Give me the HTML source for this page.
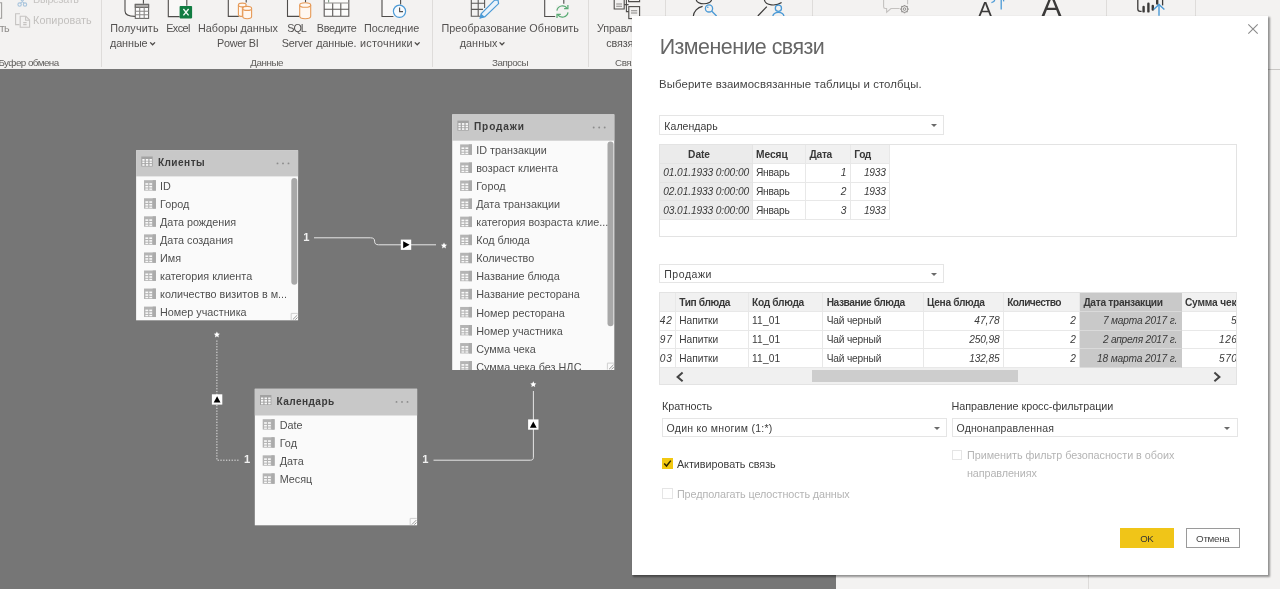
<!DOCTYPE html>
<html lang="ru">
<head>
<meta charset="utf-8">
<title>Изменение связи</title>
<style>
*{box-sizing:border-box;margin:0;padding:0}
html,body{width:1280px;height:589px;overflow:hidden;background:#f3f2f1;font-family:"Liberation Sans",sans-serif;color:#444}
.t{position:absolute;white-space:pre;line-height:1}
.b{position:absolute}
svg{position:absolute;overflow:visible}
#ribbon,#canvas,#dlg{will-change:transform}
#ribbon{position:absolute;left:0;top:0;width:1280px;height:69px;background:#f3f2f1;overflow:hidden}
#ribbon .sep{position:absolute;top:0;width:1px;height:67px;background:#dedcda}
#canvas{position:absolute;left:0;top:0;width:1280px;height:589px}
#gray{position:absolute;left:0;top:69px;width:836px;height:520px;background:#767676}
#dlg{position:absolute;left:632px;top:16px;width:636px;height:559px;background:#fff;box-shadow:1.4px 1.4px 1.8px 0.2px rgba(0,0,0,.40)}
.dd{position:absolute;height:19.4px;border:1px solid #e5e5e5;background:#fff}
.dd:after{content:"";position:absolute;right:6.4px;top:8px;border-left:3.2px solid transparent;border-right:3.2px solid transparent;border-top:3.4px solid #6a6a6a}
.grid{position:absolute;border:1px solid #e3e3e3;background:#fff;overflow:hidden}
.c{position:absolute;border-right:1px solid #e8e8e8;border-bottom:1px solid #e8e8e8;background:#fff}
.c.h{background:#f1f1f1}
.c.g{background:#ebebeb;border-color:#e4e4e4}
.c.s{background:#c9c9c9;border-right-color:#c9c9c9;border-bottom-color:#dadada}
.cb{position:absolute;width:10.6px;height:10.6px;border:1px solid #e5e5e5;background:#fff}
</style>
</head>
<body>
<div id="ribbon">
<div class="sep" style="left:101px"></div>
<div class="sep" style="left:432px"></div>
<div class="sep" style="left:588px"></div>
<div class="sep" style="left:665px"></div>
<div class="sep" style="left:812px"></div>
<div class="sep" style="left:1106px"></div>
<div class="sep" style="left:1195px"></div>
<svg width="1280" height="69" viewBox="0 0 1280 69" style="left:0;top:0" fill="none" stroke-width="1.1">
<!-- paste / cut / copy (disabled) -->
<path d="M0 2.7H1.6V18.2H0" stroke="#a19f9d"/>
<g stroke="#a9c5dd"><circle cx="19.6" cy="4.6" r="1.7"/><circle cx="25" cy="4.6" r="1.7"/><path d="M20.6 3.2 23.6 0M24 3.2 21 0"/></g>
<g stroke="#c6c4c2"><path d="M19.5 24.6H15.6V13.8H20"/><path d="M20.2 16.2H25.8L29.6 20V27.2H20.2Z"/><path d="M25.6 16.4V20.2H29.4"/><path d="M23.2 22.6h3.4M23.2 24.6h3.4"/></g>
<!-- get data -->
<path d="M125 0V11C125 14.4 128.4 16.3 135 16.4V4H143.4V0Z" fill="#f9f8f7" stroke="none"/><g stroke="#4f4d4b"><path d="M125 0V11C125 14.4 128.4 16.3 135 16.4"/><path d="M143.4 0V3.8"/></g>
<rect x="135.3" y="4.4" width="13.3" height="14" fill="#fdfdfd" stroke="#6b6967"/>
<rect x="135.3" y="4.4" width="13.3" height="3" fill="#b4b2b0" stroke="#6b6967"/>
<path d="M135.3 11.2H148.6M135.3 14.8H148.6M139.7 7.4V18.4M144.2 7.4V18.4" stroke="#8a8886"/>
<!-- excel -->
<path d="M168.3 0V16.6H180V5.8H186.8V0Z" fill="#f9f8f7" stroke="none"/><path d="M168.3 0V16.6H179.6M186.8 0V5.7" stroke="#4f4d4b"/>
<rect x="179.6" y="5.9" width="12.5" height="12.5" rx="0.8" fill="#107c41" stroke="none"/>
<path d="M183.4 9 188.6 15.4M188.6 9 183.4 15.4" stroke="#f2faf5" stroke-width="1.35"/>
<!-- datasets -->
<path d="M228.3 0V16.4H239V4H246.2V0Z" fill="#f9f8f7" stroke="none"/><path d="M228.3 0V16.4H238.8M246.2 0V2.6" stroke="#4f4d4b"/>
<g stroke="#e69a57" fill="#fff8f1"><path d="M238.4 5V14.4C238.4 15.6 240 16.4 242.4 16.4V5"/><ellipse cx="242.3" cy="5" rx="3.9" ry="1.9"/>
<path d="M242.8 8.4V16.6C242.8 17.8 244.6 18.7 247.2 18.7S251.6 17.8 251.6 16.6V8.4"/><ellipse cx="247.2" cy="8.4" rx="4.4" ry="2"/></g>
<!-- sql -->
<path d="M287.5 0V16.4H300V4H305.5V0Z" fill="#f9f8f7" stroke="none"/><path d="M287.5 0V16.4H299.8M305.5 0V2.6" stroke="#4f4d4b"/>
<g stroke="#e69a57" fill="#fff8f1"><path d="M299.7 5V16.2C299.7 17.8 302.2 18.7 305.2 18.7S310.7 17.8 310.7 16.2V5"/><ellipse cx="305.2" cy="5" rx="5.5" ry="2.3"/></g>
<!-- enter data table -->
<rect x="324.2" y="-2" width="24.6" height="18.3" fill="#fcfcfb" stroke="none"/><path d="M324.2 0V16.3H348.8V0M324.2 9.2H348.8M332.7 3V16.3M340.8 3V16.3" stroke="#5c5a58"/><path d="M324.2 3H348.8" stroke="#9a9896"/><path d="M328.6 0V2.4" stroke="#7f9a86"/>
<!-- recent sources -->
<path d="M382 0V16.5H394V5H400.6V0Z" fill="#f9f8f7" stroke="none"/><path d="M382 0V16.5H393.4M400.6 0V4.6" stroke="#4f4d4b"/>
<circle cx="399.5" cy="11.3" r="6.1" fill="#f7fbfe" stroke="#4b9ad6" stroke-width="1.2"/>
<path d="M399.6 7.6V11.6H403" stroke="#4f4d4b"/>
<!-- transform data -->
<path d="M471.3 0V16.3H480M471.3 3.2H485M471.3 9.4H483M478.2 0V16.3M484.6 0V8" stroke="#5c5a58"/>
<path d="M480.3 17.8 481.4 13.6 494.6 0.2 498 0 498.6 3.6 485 16.6Z" fill="#eaf3fb" stroke="#4b9ad6" stroke-width="1.2"/>
<path d="M480.3 17.8 481.2 14.4 483.8 16.8Z" fill="#4b9ad6" stroke="#4b9ad6"/>
<!-- refresh -->
<path d="M544.7 0V16.5H556V5H563.8V0Z" fill="#f9f8f7" stroke="none"/><path d="M544.7 0V16.5H555.2M563.8 0V3.8" stroke="#4f4d4b"/>
<g stroke="#5aab74" stroke-width="1.25"><path d="M556.9 10.6A5.7 5.7 0 0 1 567.2 8.3"/><path d="M568 12.4A5.7 5.7 0 0 1 557.7 14.7"/><path d="M567.9 4.9V8.7H564.1"/><path d="M557 18.1V14.3H560.8"/></g>
<!-- manage relationships -->
<g stroke="#4f4d4b"><path d="M614.2 0V9H624.2V0"/><path d="M616.2 4h5.8M616.2 6.2h5.8" stroke="#8a8886"/><path d="M624.2 4.6H628.6M626.4 0V11.6H628.8"/><path d="M628.6 0V1.6H639.6V0"/><rect x="628.8" y="6.6" width="10.8" height="12"/><path d="M631 10.8h6.2M631 13h6.2" stroke="#8a8886"/></g>
<!-- security icons -->
<g stroke="#3b3a39" stroke-width="1.2"><path d="M696.2 0C698 5 709.6 5 711.6 0"/><path d="M693.4 16C693.8 11.4 697.4 7.4 702.6 6.4"/></g>
<g stroke="#4b9ad6" stroke-width="1.3"><circle cx="709" cy="8.4" r="3.6"/><path d="M711.6 11 716.6 16"/></g><circle cx="707.8" cy="7.2" r="0.8" fill="#4b9ad6"/>
<g stroke="#3b3a39" stroke-width="1.2"><path d="M764.4 0C765.6 5.8 776 6.4 781.6 2.4"/><path d="M757.8 16 766.8 6.6"/></g>
<g stroke="#4b9ad6" stroke-width="1.3"><circle cx="778.4" cy="8.2" r="3.1"/><path d="M772.8 16.4C773.2 13.6 775.8 12.3 778.4 12.3S783.6 13.6 784 16.4"/></g>
<!-- Q&A bubble (disabled) -->
<g stroke="#c4c2c0"><path d="M883.6 0V6.8C883.6 7.9 884.2 8.5 885.2 8.5H886.6V12.2L891 8.5H899.6"/><path d="M907.6 0V4.2"/></g>
<g stroke="#8e8c8a" stroke-width="1"><circle cx="904.5" cy="9.1" r="3.3"/><circle cx="904.5" cy="9.1" r="1.3"/><path d="M904.5 4.9V5.8M904.5 12.4V13.3M900.3 9.1H901.2M907.8 9.1H908.7M901.5 6.1 902.2 6.8M906.8 11.4 907.5 12.1M901.5 12.1 902.2 11.4M906.8 6.8 907.5 6.1" stroke-width="1.3"/></g>
<!-- text size icon marks -->
<g stroke="#4b9ad6" stroke-width="1.3"><path d="M1001.2 0V9.4"/><path d="M991.4 2.6C993.2 2.4 994.4 1.4 994.8 0"/><path d="M1003.6 0V1.4" /></g>
<!-- publish -->
<g stroke="#3b3a39" stroke-width="1.3"><path d="M1137.8 0V9C1137.8 10.6 1138.6 11.4 1140.2 11.4H1141.6"/><path d="M1162.6 0V5.4"/></g>
<g stroke="#3b3a39" stroke-width="2.4" stroke-linecap="round"><path d="M1143.6 7V11.4"/><path d="M1148.4 3.8V11.4"/><path d="M1152.8 6V9.6"/><path d="M1157.2 0.8V3.6"/></g>
<g stroke="#4b9ad6" stroke-width="1.4"><path d="M1159 15.8V4.4"/><path d="M1153.6 9.6 1159 4.4 1164.4 9.6"/></g>
<!-- chevrons -->
<g stroke="#4a4846" stroke-width="1.3"><path d="M150.2 42.4 152.6 44.8 155 42.4"/><path d="M414.8 42.4 417.2 44.8 419.6 42.4"/><path d="M499.6 42.4 502 44.8 504.4 42.4"/></g>
</svg>

<span class="t" style="left:33.05px;top:-6.00px;font-size:10.8px;letter-spacing:-0.305px;color:#c6c4c2">Вырезать</span>
<span class="t" style="left:33.05px;top:15.00px;font-size:10.8px;letter-spacing:0.051px;color:#c2c0be">Копировать</span>
<span class="t" style="left:-0.35px;top:23.00px;font-size:10.8px;letter-spacing:-0.682px;color:#8f8d8b">ть</span>
<span class="t" style="left:110.15px;top:23.00px;font-size:10.8px;letter-spacing:0.135px;color:#535150">Получить</span>
<span class="t" style="left:109.95px;top:38.00px;font-size:10.8px;letter-spacing:-0.061px;color:#535150">данные</span>
<span class="t" style="left:166.15px;top:23.00px;font-size:10.8px;letter-spacing:-0.553px;color:#535150">Excel</span>
<span class="t" style="left:198.05px;top:23.00px;font-size:10.8px;letter-spacing:-0.030px;color:#535150">Наборы данных</span>
<span class="t" style="left:217.05px;top:38.00px;font-size:10.8px;letter-spacing:-0.302px;color:#535150">Power BI</span>
<span class="t" style="left:287.35px;top:23.00px;font-size:10.8px;letter-spacing:-1.107px;color:#535150">SQL</span>
<span class="t" style="left:281.65px;top:38.00px;font-size:10.8px;letter-spacing:-0.163px;color:#535150">Server</span>
<span class="t" style="left:316.75px;top:23.00px;font-size:10.8px;letter-spacing:-0.292px;color:#535150">Введите</span>
<span class="t" style="left:316.35px;top:38.00px;font-size:10.8px;letter-spacing:-0.151px;color:#535150">данные.</span>
<span class="t" style="left:364.05px;top:23.00px;font-size:10.8px;letter-spacing:-0.054px;color:#535150">Последние</span>
<span class="t" style="left:360.05px;top:38.00px;font-size:10.8px;letter-spacing:0.249px;color:#535150">источники</span>
<span class="t" style="left:441.45px;top:23.00px;font-size:10.8px;letter-spacing:0.045px;color:#535150">Преобразование</span>
<span class="t" style="left:459.65px;top:38.00px;font-size:10.8px;letter-spacing:0.081px;color:#535150">данных</span>
<span class="t" style="left:529.35px;top:23.00px;font-size:10.8px;letter-spacing:0.101px;color:#535150">Обновить</span>
<span class="t" style="left:597.05px;top:23.00px;font-size:10.8px;letter-spacing:-0.159px;color:#535150">Управление</span>
<span class="t" style="left:606.25px;top:38.00px;font-size:10.8px;letter-spacing:-0.121px;color:#535150">связями</span>
<span class="t" style="left:-1.59px;top:58.00px;font-size:9.8px;letter-spacing:-0.527px;color:#5f5d5b">Буфер обмена</span>
<span class="t" style="left:250.21px;top:58.00px;font-size:9.8px;letter-spacing:-0.426px;color:#5f5d5b">Данные</span>
<span class="t" style="left:492.01px;top:58.00px;font-size:9.8px;letter-spacing:-0.490px;color:#5f5d5b">Запросы</span>
<span class="t" style="left:615.01px;top:58.00px;font-size:9.8px;letter-spacing:-0.400px;color:#5f5d5b">Связи</span>
<span class="t" style="left:978.50px;top:-1.00px;font-size:20px;color:#3b3a39">A</span>
<span class="t" style="left:1041.60px;top:-9.00px;font-size:30px;color:#3b3a39">A</span>
</div>
<div id="canvas">
<div id="gray"></div>
<div class="b" style="left:1088px;top:70px;width:1px;height:519px;background:#dddbd9"></div>
<div class="b" style="left:836px;top:69px;width:444px;height:1px;background:#c8c6c4"></div>
<svg width="1280" height="589" viewBox="0 0 1280 589" style="left:0;top:0">
<defs>
<g id="hic"><rect width="11.4" height="10" fill="#a2a2a2"/><rect x="1.0" y="2.5" width="2.3" height="1.8" fill="#f8f8f8"/><rect x="4.5" y="2.5" width="2.5" height="1.8" fill="#f8f8f8"/><rect x="8.2" y="2.5" width="2.4" height="1.8" fill="#f8f8f8"/><rect x="1.0" y="5.0" width="2.3" height="1.7" fill="#f8f8f8"/><rect x="4.5" y="5.0" width="2.5" height="1.7" fill="#f8f8f8"/><rect x="8.2" y="5.0" width="2.4" height="1.7" fill="#f8f8f8"/><rect x="1.0" y="7.6" width="2.3" height="1.7" fill="#f8f8f8"/><rect x="4.5" y="7.6" width="2.5" height="1.7" fill="#f8f8f8"/><rect x="8.2" y="7.6" width="2.4" height="1.7" fill="#f8f8f8"/></g>
<g id="tic"><rect width="11.9" height="10.4" fill="#b4b4b4"/><rect x="8.7" width="3.2" height="10.4" fill="#ababab"/><rect x="1.4" y="3.0" width="2.8" height="1.6" fill="#fafafa"/><rect x="5.3" y="3.0" width="2.8" height="1.6" fill="#fafafa"/><rect x="1.4" y="5.7" width="2.8" height="1.6" fill="#fafafa"/><rect x="5.3" y="5.7" width="2.8" height="1.6" fill="#fafafa"/><rect x="1.4" y="8.3" width="2.8" height="1.3" fill="#fafafa"/><rect x="5.3" y="8.3" width="2.8" height="1.3" fill="#fafafa"/></g>
<path id="st" d="M0.00 -3.20 0.91 -1.25 3.04 -0.99 1.47 0.48 1.88 2.59 0.00 1.55 -1.88 2.59 -1.47 0.48 -3.04 -0.99 -0.91 -1.25Z" fill="#fff"/>
<g id="grip"><path d="M0.5 7V0.5H7" fill="none" stroke="#cfcfcf" stroke-width="1"/><path d="M2.2 6.6 6.6 2.2M4.6 6.8 6.8 4.6" stroke="#8c8c8c" stroke-width="0.9" fill="none"/></g>
</defs>
<g fill="none" stroke="#e6e6e6" stroke-width="1.0">
<path d="M314 237.8H370.4C373.6 237.8 374.6 239 374.6 241.2C374.6 243.6 375.8 244.8 378.6 244.8H436"/>
<path d="M433.5 460.2H530.4C532.6 460.2 533.4 459.2 533.4 457.2V391"/>
<path d="M216.9 340.5V460.2H240" stroke-dasharray="1.3 1.5"/></g>
<g fill="#fff"><rect x="400.8" y="239.6" width="10.4" height="10.3"/><rect x="528.1" y="419.4" width="10.4" height="10.3"/><rect x="211.9" y="394.3" width="10.4" height="10.3"/></g>
<g fill="#000"><path d="M403.2 241.3 409.6 244.8 403.2 248.3Z"/><path d="M529.9 427.7 533.3 421.4 536.7 427.7Z"/><path d="M213.7 402.6 217.1 396.3 220.5 402.6Z"/></g>
<use href="#st" x="444" y="245.8"/><use href="#st" x="533.3" y="384.4"/><use href="#st" x="216.9" y="334.8"/>
<g>
<rect x="136.1" y="150.3" width="162.0" height="170.0" fill="#fafafa"/>
<rect x="136.1" y="150.3" width="162.0" height="26.1" fill="#c8c8c8"/>
<use href="#hic" x="141.3" y="156.5"/>
<circle cx="277.5" cy="163.4" r="0.95" fill="#8c8c8c"/>
<circle cx="283.0" cy="163.4" r="0.95" fill="#8c8c8c"/>
<circle cx="288.5" cy="163.4" r="0.95" fill="#8c8c8c"/>
<use href="#tic" x="144.0" y="180.20"/>
<use href="#tic" x="144.0" y="198.26"/>
<use href="#tic" x="144.0" y="216.32"/>
<use href="#tic" x="144.0" y="234.38"/>
<use href="#tic" x="144.0" y="252.44"/>
<use href="#tic" x="144.0" y="270.50"/>
<use href="#tic" x="144.0" y="288.56"/>
<use href="#tic" x="144.0" y="306.62"/>
<rect x="291.3" y="177.9" width="6" height="106.8" rx="3" fill="#a8a8a8"/>
<use href="#grip" x="290.7" y="312.9"/>
</g>
<g>
<rect x="452.2" y="114.4" width="162.1" height="255.6" fill="#fafafa"/>
<rect x="452.2" y="114.4" width="162.1" height="26.3" fill="#c8c8c8"/>
<use href="#hic" x="457.4" y="120.6"/>
<circle cx="593.7" cy="127.5" r="0.95" fill="#8c8c8c"/>
<circle cx="599.2" cy="127.5" r="0.95" fill="#8c8c8c"/>
<circle cx="604.7" cy="127.5" r="0.95" fill="#8c8c8c"/>
<use href="#tic" x="460.1" y="144.40"/>
<use href="#tic" x="460.1" y="162.46"/>
<use href="#tic" x="460.1" y="180.52"/>
<use href="#tic" x="460.1" y="198.58"/>
<use href="#tic" x="460.1" y="216.64"/>
<use href="#tic" x="460.1" y="234.70"/>
<use href="#tic" x="460.1" y="252.76"/>
<use href="#tic" x="460.1" y="270.82"/>
<use href="#tic" x="460.1" y="288.88"/>
<use href="#tic" x="460.1" y="306.94"/>
<use href="#tic" x="460.1" y="325.00"/>
<use href="#tic" x="460.1" y="343.06"/>
<use href="#tic" x="460.1" y="361.12"/>
<rect x="607.5" y="141.6" width="6" height="184.7" rx="3" fill="#a8a8a8"/>
<use href="#grip" x="606.9" y="362.6"/>
</g>
<g>
<rect x="254.8" y="388.8" width="162.3" height="136.5" fill="#fafafa"/>
<rect x="254.8" y="388.8" width="162.3" height="26.7" fill="#c8c8c8"/>
<use href="#hic" x="260.0" y="395.0"/>
<circle cx="396.5" cy="401.9" r="0.95" fill="#8c8c8c"/>
<circle cx="402.0" cy="401.9" r="0.95" fill="#8c8c8c"/>
<circle cx="407.5" cy="401.9" r="0.95" fill="#8c8c8c"/>
<use href="#tic" x="262.7" y="419.20"/>
<use href="#tic" x="262.7" y="437.26"/>
<use href="#tic" x="262.7" y="455.32"/>
<use href="#tic" x="262.7" y="473.38"/>
<use href="#grip" x="409.7" y="517.9"/>
</g>
</svg>
<span class="t" style="left:157.89px;top:158.00px;font-size:10.1px;font-weight:bold;letter-spacing:0.458px;color:#3c3c3c">Клиенты</span>
<span class="t" style="left:160.05px;top:181.00px;font-size:10.8px;letter-spacing:0.000px;color:#505050">ID</span>
<span class="t" style="left:160.05px;top:199.00px;font-size:10.8px;letter-spacing:0.000px;color:#505050">Город</span>
<span class="t" style="left:160.05px;top:217.00px;font-size:10.8px;letter-spacing:0.000px;color:#505050">Дата рождения</span>
<span class="t" style="left:160.05px;top:235.00px;font-size:10.8px;letter-spacing:0.000px;color:#505050">Дата создания</span>
<span class="t" style="left:160.05px;top:253.00px;font-size:10.8px;letter-spacing:0.000px;color:#505050">Имя</span>
<span class="t" style="left:160.05px;top:271.00px;font-size:10.8px;letter-spacing:0.000px;color:#505050">категория клиента</span>
<span class="t" style="left:160.05px;top:289.00px;font-size:10.8px;letter-spacing:0.000px;color:#505050">количество визитов в м...</span>
<span class="t" style="left:160.05px;top:307.00px;font-size:10.8px;letter-spacing:0.000px;color:#505050">Номер участника</span>
<span class="t" style="left:473.99px;top:122.00px;font-size:10.1px;font-weight:bold;letter-spacing:0.861px;color:#3c3c3c">Продажи</span>
<span class="t" style="left:476.25px;top:145.00px;font-size:10.8px;letter-spacing:0.000px;color:#505050">ID транзакции</span>
<span class="t" style="left:476.25px;top:163.00px;font-size:10.8px;letter-spacing:0.000px;color:#505050">возраст клиента</span>
<span class="t" style="left:476.25px;top:181.00px;font-size:10.8px;letter-spacing:0.000px;color:#505050">Город</span>
<span class="t" style="left:476.25px;top:199.00px;font-size:10.8px;letter-spacing:0.000px;color:#505050">Дата транзакции</span>
<span class="t" style="left:476.25px;top:217.00px;font-size:10.8px;letter-spacing:0.000px;color:#505050">категория возраста клие...</span>
<span class="t" style="left:476.25px;top:235.00px;font-size:10.8px;letter-spacing:0.000px;color:#505050">Код блюда</span>
<span class="t" style="left:476.25px;top:253.00px;font-size:10.8px;letter-spacing:0.000px;color:#505050">Количество</span>
<span class="t" style="left:476.25px;top:271.00px;font-size:10.8px;letter-spacing:0.000px;color:#505050">Название блюда</span>
<span class="t" style="left:476.25px;top:289.00px;font-size:10.8px;letter-spacing:0.000px;color:#505050">Название ресторана</span>
<span class="t" style="left:476.25px;top:308.00px;font-size:10.8px;letter-spacing:0.000px;color:#505050">Номер ресторана</span>
<span class="t" style="left:476.25px;top:326.00px;font-size:10.8px;letter-spacing:0.000px;color:#505050">Номер участника</span>
<span class="t" style="left:476.25px;top:344.00px;font-size:10.8px;letter-spacing:0.000px;color:#505050">Сумма чека</span>
<span class="t" style="left:476.25px;top:362.00px;font-size:10.8px;letter-spacing:0.000px;color:#505050">Сумма чека без НДС</span>
<span class="t" style="left:276.59px;top:397.00px;font-size:10.1px;font-weight:bold;letter-spacing:0.416px;color:#3c3c3c">Календарь</span>
<span class="t" style="left:279.75px;top:420.00px;font-size:10.8px;letter-spacing:0.000px;color:#505050">Date</span>
<span class="t" style="left:279.75px;top:438.00px;font-size:10.8px;letter-spacing:0.000px;color:#505050">Год</span>
<span class="t" style="left:279.75px;top:456.00px;font-size:10.8px;letter-spacing:0.000px;color:#505050">Дата</span>
<span class="t" style="left:279.75px;top:474.00px;font-size:10.8px;letter-spacing:0.000px;color:#505050">Месяц</span>
<span class="t" style="left:303.33px;top:232.00px;font-size:11.2px;font-weight:bold;color:#f0f0f0">1</span>
<span class="t" style="left:243.93px;top:454.00px;font-size:11.2px;font-weight:bold;color:#f0f0f0">1</span>
<span class="t" style="left:422.13px;top:454.00px;font-size:11.2px;font-weight:bold;color:#f0f0f0">1</span>
<div class="b" style="left:452px;top:370px;width:163px;height:8px;background:#767676"></div>
</div>
<div id="dlg">
<svg width="10" height="10" viewBox="0 0 10 10" style="left:616.4000000000001px;top:8.0px" stroke="#8a8a8a" stroke-width="1.1" fill="none"><path d="M0.3 0.3 9.7 9.7M9.7 0.3 0.3 9.7"/></svg>
<div class="dd" style="left:27.3px;top:99.4px;width:285.0px;height:19.3px;"></div>
<div class="dd" style="left:27.3px;top:247.6px;width:285.0px;height:19.3px;"></div>
<div class="dd" style="left:30.1px;top:401.6px;width:285.0px;height:19.0px;"></div>
<div class="dd" style="left:319.6px;top:401.6px;width:286.0px;height:19.0px;"></div>
<div class="grid" style="left:27.3px;top:128.2px;width:578.0px;height:92.4px">
<div class="c h g" style="left:-0.3px;top:-0.6px;width:93.2px;height:19.3px"></div>
<div class="c h" style="left:92.9px;top:-0.6px;width:52.8px;height:19.3px"></div>
<div class="c h" style="left:145.7px;top:-0.6px;width:45.2px;height:19.3px"></div>
<div class="c h" style="left:190.9px;top:-0.6px;width:39.0px;height:19.3px"></div>
<div class="c g" style="left:-0.3px;top:18.7px;width:93.2px;height:18.9px"></div>
<div class="c" style="left:92.9px;top:18.7px;width:52.8px;height:18.9px"></div>
<div class="c" style="left:145.7px;top:18.7px;width:45.2px;height:18.9px"></div>
<div class="c" style="left:190.9px;top:18.7px;width:39.0px;height:18.9px"></div>
<div class="c g" style="left:-0.3px;top:37.6px;width:93.2px;height:18.5px"></div>
<div class="c" style="left:92.9px;top:37.6px;width:52.8px;height:18.5px"></div>
<div class="c" style="left:145.7px;top:37.6px;width:45.2px;height:18.5px"></div>
<div class="c" style="left:190.9px;top:37.6px;width:39.0px;height:18.5px"></div>
<div class="c g" style="left:-0.3px;top:56.1px;width:93.2px;height:18.7px"></div>
<div class="c" style="left:92.9px;top:56.1px;width:52.8px;height:18.7px"></div>
<div class="c" style="left:145.7px;top:56.1px;width:45.2px;height:18.7px"></div>
<div class="c" style="left:190.9px;top:56.1px;width:39.0px;height:18.7px"></div>
</div>
<div class="grid" style="left:27.3px;top:276.4px;width:578.0px;height:92.4px">
<div class="c h" style="left:-0.3px;top:-0.6px;width:16.2px;height:19.3px"></div>
<div class="c h" style="left:15.9px;top:-0.6px;width:72.9px;height:19.3px"></div>
<div class="c h" style="left:88.8px;top:-0.6px;width:73.8px;height:19.3px"></div>
<div class="c h" style="left:162.6px;top:-0.6px;width:101.1px;height:19.3px"></div>
<div class="c h" style="left:263.7px;top:-0.6px;width:79.9px;height:19.3px"></div>
<div class="c h" style="left:343.6px;top:-0.6px;width:76.5px;height:19.3px"></div>
<div class="c h s" style="left:420.1px;top:-0.6px;width:101.5px;height:19.3px"></div>
<div class="c h" style="left:521.6px;top:-0.6px;width:58.1px;height:19.3px"></div>
<div class="c" style="left:-0.3px;top:18.7px;width:16.2px;height:18.6px"></div>
<div class="c" style="left:15.9px;top:18.7px;width:72.9px;height:18.6px"></div>
<div class="c" style="left:88.8px;top:18.7px;width:73.8px;height:18.6px"></div>
<div class="c" style="left:162.6px;top:18.7px;width:101.1px;height:18.6px"></div>
<div class="c" style="left:263.7px;top:18.7px;width:79.9px;height:18.6px"></div>
<div class="c" style="left:343.6px;top:18.7px;width:76.5px;height:18.6px"></div>
<div class="c s" style="left:420.1px;top:18.7px;width:101.5px;height:18.6px"></div>
<div class="c" style="left:521.6px;top:18.7px;width:58.1px;height:18.6px"></div>
<div class="c" style="left:-0.3px;top:37.3px;width:16.2px;height:18.7px"></div>
<div class="c" style="left:15.9px;top:37.3px;width:72.9px;height:18.7px"></div>
<div class="c" style="left:88.8px;top:37.3px;width:73.8px;height:18.7px"></div>
<div class="c" style="left:162.6px;top:37.3px;width:101.1px;height:18.7px"></div>
<div class="c" style="left:263.7px;top:37.3px;width:79.9px;height:18.7px"></div>
<div class="c" style="left:343.6px;top:37.3px;width:76.5px;height:18.7px"></div>
<div class="c s" style="left:420.1px;top:37.3px;width:101.5px;height:18.7px"></div>
<div class="c" style="left:521.6px;top:37.3px;width:58.1px;height:18.7px"></div>
<div class="c" style="left:-0.3px;top:56.0px;width:16.2px;height:18.4px"></div>
<div class="c" style="left:15.9px;top:56.0px;width:72.9px;height:18.4px"></div>
<div class="c" style="left:88.8px;top:56.0px;width:73.8px;height:18.4px"></div>
<div class="c" style="left:162.6px;top:56.0px;width:101.1px;height:18.4px"></div>
<div class="c" style="left:263.7px;top:56.0px;width:79.9px;height:18.4px"></div>
<div class="c" style="left:343.6px;top:56.0px;width:76.5px;height:18.4px"></div>
<div class="c s" style="left:420.1px;top:56.0px;width:101.5px;height:18.4px"></div>
<div class="c" style="left:521.6px;top:56.0px;width:58.1px;height:18.4px"></div>
<div class="b" style="left:0;top:74.4px;width:600px;height:17px;background:#f0f0f0"></div>
<div class="b" style="left:151.8px;top:76.2px;width:206.1px;height:12.7px;background:#cdcdcd"></div>
<svg width="10" height="10" viewBox="0 0 10 10" style="left:15.7px;top:78.2px" stroke="#444" stroke-width="2" fill="none"><path d="M6.6 0.6 1.6 4.9 6.6 9.2"/></svg>
<svg width="10" height="10" viewBox="0 0 10 10" style="left:551.3px;top:78.2px" stroke="#444" stroke-width="2" fill="none"><path d="M2.4 0.6 7.4 4.9 2.4 9.2"/></svg>
</div>
<div class="b" style="left:30.1px;top:442.2px;width:10.8px;height:10.8px;background:#f2c811"></div>
<svg width="11" height="11" viewBox="0 0 11 11" style="left:30.1px;top:442.2px" stroke="#2e2600" stroke-width="1.5" fill="none"><path d="M2.2 5.6 4.5 8 8.8 2.6"/></svg>
<div class="cb" style="left:30.1px;top:472.3px;width:10.6px;height:10.6px;"></div>
<div class="cb" style="left:319.6px;top:433.6px;width:10.6px;height:10.6px;"></div>
<div class="b" style="left:487.9px;top:512.0px;width:54.1px;height:19.9px;background:#f0c518"></div>
<div class="b" style="left:554.1px;top:512.0px;width:54.1px;height:19.9px;background:#fff;border:1px solid #9a9a9a"></div>
<span class="t" style="left:27.72px;top:21.00px;font-size:21.4px;letter-spacing:-0.514px;color:#666">Изменение связи</span>
<span class="t" style="left:27.12px;top:63.00px;font-size:11.4px;letter-spacing:0.080px;color:#444">Выберите взаимосвязанные таблицы и столбцы.</span>
<span class="t" style="left:32.37px;top:105.00px;font-size:10.5px;letter-spacing:0.032px;color:#3c3c3c">Календарь</span>
<span class="t" style="left:32.27px;top:253.00px;font-size:10.5px;letter-spacing:0.550px;color:#3c3c3c">Продажи</span>
<span class="t" style="left:34.57px;top:407.00px;font-size:10.5px;letter-spacing:0.269px;color:#3c3c3c">Один ко многим (1:*)</span>
<span class="t" style="left:324.57px;top:407.00px;font-size:10.5px;letter-spacing:0.148px;color:#3c3c3c">Однонаправленная</span>
<span class="t" style="left:30.05px;top:385.00px;font-size:10.8px;letter-spacing:-0.095px;color:#3c3c3c">Кратность</span>
<span class="t" style="left:319.45px;top:385.00px;font-size:10.8px;letter-spacing:-0.033px;color:#3c3c3c">Направление кросс-фильтрации</span>
<span class="t" style="left:44.95px;top:443.00px;font-size:10.8px;letter-spacing:-0.023px;color:#3c3c3c">Активировать связь</span>
<span class="t" style="left:44.95px;top:473.00px;font-size:10.8px;letter-spacing:-0.093px;color:#b4b4b4">Предполагать целостность данных</span>
<span class="t" style="left:334.95px;top:434.00px;font-size:10.8px;letter-spacing:-0.027px;color:#b4b4b4">Применить фильтр безопасности в обоих</span>
<span class="t" style="left:334.95px;top:452.00px;font-size:10.8px;letter-spacing:-0.088px;color:#b4b4b4">направлениях</span>
<span class="t" style="left:508.22px;top:518.00px;font-size:9.6px;letter-spacing:-0.323px;color:#333">OK</span>
<span class="t" style="left:564.11px;top:518.00px;font-size:9.8px;letter-spacing:-0.296px;color:#444">Отмена</span>
<span class="t" style="left:56.09px;top:134.00px;font-size:10.2px;font-weight:bold;letter-spacing:-0.057px;color:#383838">Date</span>
<span class="t" style="left:123.99px;top:134.00px;font-size:10.2px;font-weight:bold;letter-spacing:-0.017px;color:#383838">Месяц</span>
<span class="t" style="left:177.59px;top:134.00px;font-size:10.2px;font-weight:bold;letter-spacing:-0.290px;color:#383838">Дата</span>
<span class="t" style="left:222.29px;top:134.00px;font-size:10.2px;font-weight:bold;letter-spacing:-0.402px;color:#383838">Год</span>
<span class="t" style="left:31.29px;top:152.00px;font-size:10.2px;font-style:italic;letter-spacing:-0.117px;color:#3a3a3a">01.01.1933 0:00:00</span>
<span class="t" style="left:123.99px;top:152.00px;font-size:10.2px;letter-spacing:-0.220px;color:#3a3a3a">Январь</span>
<span class="t" style="left:208.64px;top:152.00px;font-size:10.2px;font-style:italic;color:#3a3a3a">1</span>
<span class="t" style="left:231.89px;top:152.00px;font-size:10.2px;font-style:italic;letter-spacing:-0.249px;color:#3a3a3a">1933</span>
<span class="t" style="left:31.29px;top:171.00px;font-size:10.2px;font-style:italic;letter-spacing:-0.117px;color:#3a3a3a">02.01.1933 0:00:00</span>
<span class="t" style="left:123.99px;top:171.00px;font-size:10.2px;letter-spacing:-0.220px;color:#3a3a3a">Январь</span>
<span class="t" style="left:208.64px;top:171.00px;font-size:10.2px;font-style:italic;color:#3a3a3a">2</span>
<span class="t" style="left:231.89px;top:171.00px;font-size:10.2px;font-style:italic;letter-spacing:-0.249px;color:#3a3a3a">1933</span>
<span class="t" style="left:31.29px;top:190.00px;font-size:10.2px;font-style:italic;letter-spacing:-0.117px;color:#3a3a3a">03.01.1933 0:00:00</span>
<span class="t" style="left:123.99px;top:190.00px;font-size:10.2px;letter-spacing:-0.220px;color:#3a3a3a">Январь</span>
<span class="t" style="left:208.64px;top:190.00px;font-size:10.2px;font-style:italic;color:#3a3a3a">3</span>
<span class="t" style="left:231.89px;top:190.00px;font-size:10.2px;font-style:italic;letter-spacing:-0.249px;color:#3a3a3a">1933</span>
<span class="t" style="left:47.19px;top:282.00px;font-size:10.2px;font-weight:bold;letter-spacing:-0.384px;color:#383838">Тип блюда</span>
<span class="t" style="left:120.09px;top:282.00px;font-size:10.2px;font-weight:bold;letter-spacing:-0.336px;color:#383838">Код блюда</span>
<span class="t" style="left:194.69px;top:282.00px;font-size:10.2px;font-weight:bold;letter-spacing:-0.440px;color:#383838">Название блюда</span>
<span class="t" style="left:295.09px;top:282.00px;font-size:10.2px;font-weight:bold;letter-spacing:-0.352px;color:#383838">Цена блюда</span>
<span class="t" style="left:375.19px;top:282.00px;font-size:10.2px;font-weight:bold;letter-spacing:-0.561px;color:#383838">Количество</span>
<span class="t" style="left:451.39px;top:282.00px;font-size:10.2px;font-weight:bold;letter-spacing:-0.301px;color:#383838">Дата транзакции</span>
<span class="t" style="left:552.89px;top:282.00px;font-size:10.2px;font-weight:bold;letter-spacing:-0.172px;color:#383838">Сумма чека</span>
<span class="t" style="left:27.69px;top:300.00px;font-size:10.2px;font-style:italic;letter-spacing:0.880px;color:#3a3a3a">42</span>
<span class="t" style="left:47.19px;top:300.00px;font-size:10.2px;letter-spacing:-0.004px;color:#3a3a3a">Напитки</span>
<span class="t" style="left:120.09px;top:300.00px;font-size:10.2px;letter-spacing:0.136px;color:#3a3a3a">11_01</span>
<span class="t" style="left:194.69px;top:300.00px;font-size:10.2px;letter-spacing:-0.171px;color:#3a3a3a">Чай черный</span>
<span class="t" style="left:342.29px;top:300.00px;font-size:10.2px;font-style:italic;letter-spacing:-0.044px;color:#3a3a3a">47,78</span>
<span class="t" style="left:438.14px;top:300.00px;font-size:10.2px;font-style:italic;color:#3a3a3a">2</span>
<span class="t" style="left:470.89px;top:300.00px;font-size:10.2px;font-style:italic;letter-spacing:-0.179px;color:#3a3a3a">7 марта 2017 г.</span>
<span class="t" style="left:27.69px;top:319.00px;font-size:10.2px;font-style:italic;letter-spacing:0.880px;color:#3a3a3a">97</span>
<span class="t" style="left:47.19px;top:319.00px;font-size:10.2px;letter-spacing:-0.004px;color:#3a3a3a">Напитки</span>
<span class="t" style="left:120.09px;top:319.00px;font-size:10.2px;letter-spacing:0.136px;color:#3a3a3a">11_01</span>
<span class="t" style="left:194.69px;top:319.00px;font-size:10.2px;letter-spacing:-0.171px;color:#3a3a3a">Чай черный</span>
<span class="t" style="left:337.29px;top:319.00px;font-size:10.2px;font-style:italic;letter-spacing:-0.170px;color:#3a3a3a">250,98</span>
<span class="t" style="left:438.14px;top:319.00px;font-size:10.2px;font-style:italic;color:#3a3a3a">2</span>
<span class="t" style="left:470.89px;top:319.00px;font-size:10.2px;font-style:italic;letter-spacing:-0.233px;color:#3a3a3a">2 апреля 2017 г.</span>
<span class="t" style="left:27.69px;top:338.00px;font-size:10.2px;font-style:italic;letter-spacing:0.880px;color:#3a3a3a">03</span>
<span class="t" style="left:47.19px;top:338.00px;font-size:10.2px;letter-spacing:-0.004px;color:#3a3a3a">Напитки</span>
<span class="t" style="left:120.09px;top:338.00px;font-size:10.2px;letter-spacing:0.136px;color:#3a3a3a">11_01</span>
<span class="t" style="left:194.69px;top:338.00px;font-size:10.2px;letter-spacing:-0.171px;color:#3a3a3a">Чай черный</span>
<span class="t" style="left:337.29px;top:338.00px;font-size:10.2px;font-style:italic;letter-spacing:-0.170px;color:#3a3a3a">132,85</span>
<span class="t" style="left:438.14px;top:338.00px;font-size:10.2px;font-style:italic;color:#3a3a3a">2</span>
<span class="t" style="left:465.09px;top:338.00px;font-size:10.2px;font-style:italic;letter-spacing:-0.159px;color:#3a3a3a">18 марта 2017 г.</span>
<span class="t" style="left:598.89px;top:300.00px;font-size:10.2px;font-style:italic;color:#3a3a3a">5</span>
<span class="t" style="left:587.09px;top:319.00px;font-size:10.2px;font-style:italic;letter-spacing:0.462px;color:#3a3a3a">126</span>
<span class="t" style="left:587.09px;top:338.00px;font-size:10.2px;font-style:italic;letter-spacing:0.462px;color:#3a3a3a">570</span>
<div class="b" style="left:604.3px;top:276.4px;width:12px;height:92.4px;background:#fff;border-left:1px solid #e3e3e3"></div>
</div>
</body>
</html>
